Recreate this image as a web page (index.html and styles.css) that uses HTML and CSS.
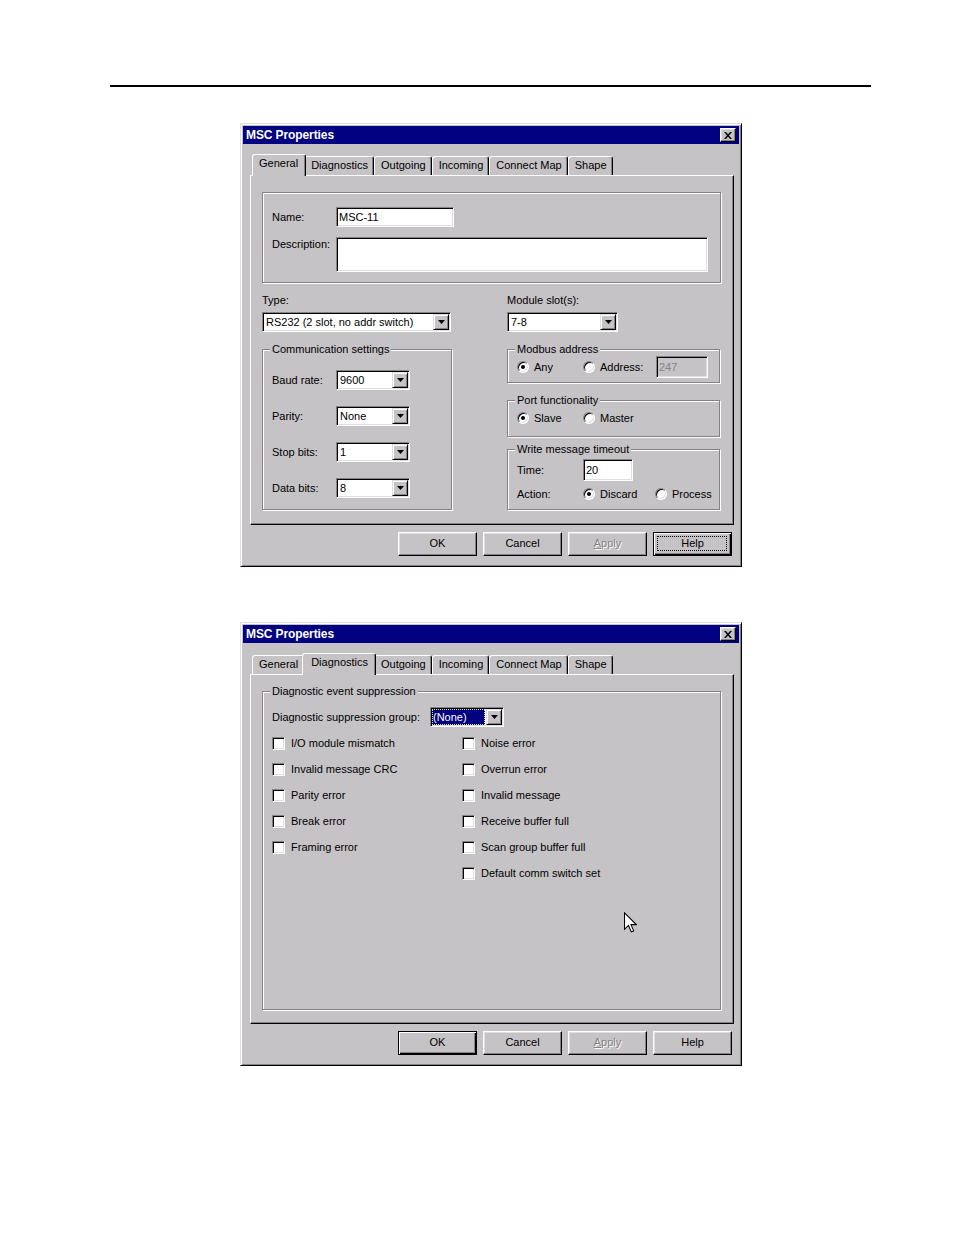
FILE: index.html
```html
<!DOCTYPE html>
<html>
<head>
<meta charset="utf-8">
<link rel="stylesheet" href="styles.css">
</head>
<body>
<div class="page">
  <div class="rule"></div>

  <div class="dialog d1">
    <div class="titlebar">
      <span class="title">MSC Properties</span>
      <span class="close"><svg width="8" height="7" viewBox="0 0 8 7"><path d="M0 0h2l2 2.4L6 0h2L5 3.5 8 7H6L4 4.6 2 7H0l3-3.5z" fill="#000"/></svg></span>
    </div>
    <div class="tabs">
      <div class="tab active">General</div>
      <div class="tab">Diagnostics</div>
      <div class="tab">Outgoing</div>
      <div class="tab">Incoming</div>
      <div class="tab">Connect Map</div>
      <div class="tab">Shape</div>
    </div>
    <div class="panel">
      <div class="plain-grp">
        <div class="frow">
          <span class="lbl w64">Name:</span>
          <div class="edit w118">MSC-11</div>
        </div>
        <div class="frow top">
          <span class="lbl w64 lbl-top">Description:</span>
          <div class="edit w372 tall"></div>
        </div>
      </div>
      <div class="cols">
        <div class="col">
          <span class="lbl-line">Type:</span>
          <div class="combo w189 mt5"><span class="val">RS232 (2 slot, no addr switch)</span><span class="drop"><svg width="7" height="4" viewBox="0 0 7 4"><path d="M0 0h7L3.5 4z" fill="#000"/></svg></span></div>
          <div class="grp g-comm">
            <span class="cap">Communication settings</span>
            <div class="rows">
              <div class="frow"><span class="lbl w64">Baud rate:</span><div class="combo w74"><span class="val">9600</span><span class="drop"><svg width="7" height="4" viewBox="0 0 7 4"><path d="M0 0h7L3.5 4z" fill="#000"/></svg></span></div></div>
              <div class="frow"><span class="lbl w64">Parity:</span><div class="combo w74"><span class="val">None</span><span class="drop"><svg width="7" height="4" viewBox="0 0 7 4"><path d="M0 0h7L3.5 4z" fill="#000"/></svg></span></div></div>
              <div class="frow"><span class="lbl w64">Stop bits:</span><div class="combo w74"><span class="val">1</span><span class="drop"><svg width="7" height="4" viewBox="0 0 7 4"><path d="M0 0h7L3.5 4z" fill="#000"/></svg></span></div></div>
              <div class="frow"><span class="lbl w64">Data bits:</span><div class="combo w74"><span class="val">8</span><span class="drop"><svg width="7" height="4" viewBox="0 0 7 4"><path d="M0 0h7L3.5 4z" fill="#000"/></svg></span></div></div>
            </div>
          </div>
        </div>
        <div class="col">
          <span class="lbl-line">Module slot(s):</span>
          <div class="combo w111 mt5"><span class="val">7-8</span><span class="drop"><svg width="7" height="4" viewBox="0 0 7 4"><path d="M0 0h7L3.5 4z" fill="#000"/></svg></span></div>
          <div class="grp g-modbus">
            <span class="cap">Modbus address</span>
            <div class="frow">
              <span class="opt w66"><span class="radio on"></span>Any</span>
              <span class="opt w73"><span class="radio"></span>Address:</span>
              <div class="edit w52 h22 disabled">247</div>
            </div>
          </div>
          <div class="grp g-port">
            <span class="cap">Port functionality</span>
            <div class="orow">
              <span class="opt w66"><span class="radio on"></span>Slave</span>
              <span class="opt"><span class="radio"></span>Master</span>
            </div>
          </div>
          <div class="grp g-wmt">
            <span class="cap">Write message timeout</span>
            <div class="frow time-row">
              <span class="lbl w66">Time:</span>
              <div class="edit w50 h22">20</div>
            </div>
            <div class="orow action-row">
              <span class="lbl w66">Action:</span>
              <span class="opt w72"><span class="radio on"></span>Discard</span>
              <span class="opt"><span class="radio"></span>Process</span>
            </div>
          </div>
        </div>
      </div>
    </div>
    <div class="btns">
      <div class="btn">OK</div>
      <div class="btn">Cancel</div>
      <div class="btn disabled"><u>A</u>pply</div>
      <div class="btn def focus">Help</div>
    </div>
  </div>

  <div class="dialog d2">
    <div class="titlebar">
      <span class="title">MSC Properties</span>
      <span class="close"><svg width="8" height="7" viewBox="0 0 8 7"><path d="M0 0h2l2 2.4L6 0h2L5 3.5 8 7H6L4 4.6 2 7H0l3-3.5z" fill="#000"/></svg></span>
    </div>
    <div class="tabs">
      <div class="tab">General</div>
      <div class="tab active">Diagnostics</div>
      <div class="tab">Outgoing</div>
      <div class="tab">Incoming</div>
      <div class="tab">Connect Map</div>
      <div class="tab">Shape</div>
    </div>
    <div class="panel panel2">
      <div class="grp g-diag">
        <span class="cap">Diagnostic event suppression</span>
        <div class="frow sup-row">
          <span class="lbl w158">Diagnostic suppression group:</span>
          <div class="combo w74"><span class="val sel"><span>(None)</span></span><span class="drop"><svg width="7" height="4" viewBox="0 0 7 4"><path d="M0 0h7L3.5 4z" fill="#000"/></svg></span></div>
        </div>
        <div class="checks">
          <div class="ccol left">
            <span class="chkrow"><span class="chk"></span>I/O module mismatch</span>
            <span class="chkrow"><span class="chk"></span>Invalid message CRC</span>
            <span class="chkrow"><span class="chk"></span>Parity error</span>
            <span class="chkrow"><span class="chk"></span>Break error</span>
            <span class="chkrow"><span class="chk"></span>Framing error</span>
          </div>
          <div class="ccol">
            <span class="chkrow"><span class="chk"></span>Noise error</span>
            <span class="chkrow"><span class="chk"></span>Overrun error</span>
            <span class="chkrow"><span class="chk"></span>Invalid message</span>
            <span class="chkrow"><span class="chk"></span>Receive buffer full</span>
            <span class="chkrow"><span class="chk"></span>Scan group buffer full</span>
            <span class="chkrow"><span class="chk"></span>Default comm switch set</span>
          </div>
        </div>
      </div>
    </div>
    <div class="btns">
      <div class="btn def">OK</div>
      <div class="btn">Cancel</div>
      <div class="btn disabled"><u>A</u>pply</div>
      <div class="btn">Help</div>
    </div>
    <svg class="cursor" width="13" height="21" viewBox="0 0 12.5 19.5"><path d="M0.5 0.5V16.3L4.3 12.6L7 18.8L9.3 17.8L6.7 11.8H11.8Z" fill="#fff" stroke="#000" stroke-width="1" stroke-linejoin="miter"/></svg>
  </div>
</div>
</body>
</html>
```

FILE: styles.css
```css
* { box-sizing: border-box; }
html, body { margin: 0; padding: 0; background: #fff; }
body {
  font-family: "Liberation Sans", Arial, sans-serif;
  font-size: 11px;
  color: #000;
}
.page { padding-top: 85px; }
.rule { margin-left: 110px; width: 761px; height: 2px; background: #000; }

.dialog {
  position: relative;
  width: 502px;
  margin-left: 240px;
  background: #c6c3c6;
  border: 1px solid;
  border-color: #dfdfdf #000 #000 #dfdfdf;
  box-shadow: inset 1px 1px #fff, inset -1px -1px #848284;
  padding: 2px;
}
.d1 { margin-top: 36px; }
.d2 { margin-top: 55px; }

.titlebar {
  display: flex;
  align-items: center;
  justify-content: space-between;
  height: 18px;
  background: #000080;
  color: #fff;
  padding: 0 3px 0 3px;
}
.title { font-weight: bold; font-size: 12px; letter-spacing: -0.1px; }
.close {
  width: 16px;
  height: 14px;
  background: #c6c3c6;
  border: 1px solid;
  border-color: #fff #000 #000 #fff;
  box-shadow: inset -1px -1px #848284, inset 1px 1px #dfdfdf;
  display: flex;
  align-items: center;
  justify-content: center;
}
.close svg { display: block; }

.tabs {
  display: flex;
  align-items: flex-end;
  height: 21px;
  margin: 10px 0 0 7px;
  padding-left: 2px;
}
.tab {
  height: 19px;
  padding: 0 5px 0 6px;
  line-height: 17px;
  border-top: 1px solid #fff;
  border-left: 1px solid #fff;
  border-right: 1px solid #000;
  box-shadow: inset -1px 0 #848284;
  border-radius: 3px 3px 0 0;
  background: #c6c3c6;
  white-space: nowrap;
}
.tab.active {
  position: relative;
  z-index: 1;
  height: 22px;
  margin: 0 -2px -1px -2px;
  padding: 0 7px 0 8px;
}
.tab.active:first-child { margin-left: 0; padding-left: 6px; }

.panel {
  display: flex;
  flex-direction: column;
  height: 350px;
  margin: 0 5px 0 7px;
  border: 1px solid;
  border-color: #fff #000 #000 #fff;
  box-shadow: inset -1px -1px #848284;
  padding: 16px 12px 0 11px;
}
.panel2 { padding-bottom: 13px; }

.plain-grp {
  display: flex;
  flex-direction: column;
  gap: 10px;
  border: 1px solid #848284;
  box-shadow: inset 1px 1px #fff, 1px 1px #fff;
  padding: 14px 9px 10px 9px;
}

.frow { display: flex; align-items: center; }
.frow.top { align-items: flex-start; }
.lbl { line-height: 20px; white-space: nowrap; flex: none; }
.lbl-top { line-height: 13px; padding-top: 1px; }
.lbl-line { display: block; line-height: 13px; }
.w64 { width: 64px; }
.w66 { width: 66px; }
.w72 { width: 72px; }
.w73 { width: 73px; }
.w158 { width: 158px; }

.edit {
  height: 20px;
  background: #fff;
  border: 1px solid;
  border-color: #848284 #fff #fff #848284;
  box-shadow: inset 1px 1px #000, inset -1px -1px #dfdfdf;
  padding: 1px 2px;
  line-height: 16px;
  white-space: nowrap;
  flex: none;
}
.edit.h22 { height: 22px; line-height: 18px; }
.edit.tall { height: 35px; }
.edit.disabled { background: #c6c3c6; color: #848284; }
.w118 { width: 118px; }
.w372 { width: 372px; }
.w52 { width: 52px; }
.w50 { width: 50px; }

.combo {
  display: flex;
  height: 20px;
  background: #fff;
  border: 1px solid;
  border-color: #848284 #fff #fff #848284;
  box-shadow: inset 1px 1px #000, inset -1px -1px #dfdfdf;
  padding: 1px;
  flex: none;
}
.combo .val {
  flex: 1;
  min-width: 0;
  padding-left: 2px;
  line-height: 16px;
  white-space: nowrap;
  overflow: hidden;
}
.combo .val.sel {
  background: #000080;
  color: #fff;
  outline: 1px dotted #e8e070;
  outline-offset: -1px;
  padding-left: 1px;
  margin-right: 1px;
}
.drop {
  width: 16px;
  height: 16px;
  flex: none;
  background: #c6c3c6;
  border: 1px solid;
  border-color: #dfdfdf #000 #000 #dfdfdf;
  box-shadow: inset 1px 1px #fff, inset -1px -1px #848284;
  display: flex;
  align-items: center;
  justify-content: center;
}
.drop svg { display: block; }
.w189 { width: 189px; }
.w111 { width: 111px; }
.w74 { width: 74px; }
.mt5 { margin-top: 5px; }

.cols {
  display: grid;
  grid-template-columns: 190px 213px;
  column-gap: 55px;
  margin-top: 11px;
}
.col { display: flex; flex-direction: column; align-items: flex-start; }
.col > .grp { align-self: stretch; }

.grp {
  display: flex;
  flex-direction: column;
  align-items: flex-start;
  border: 1px solid #848284;
  box-shadow: inset 1px 1px #fff, 1px 1px #fff;
  padding: 0 9px;
}
.cap {
  display: block;
  margin: -7px 0 0 -2px;
  padding: 0 2px;
  line-height: 13px;
  background: #c6c3c6;
  white-space: nowrap;
}

.g-comm { margin-top: 17px; padding-bottom: 11px; }
.g-comm .rows { display: flex; flex-direction: column; gap: 16px; margin-top: 14px; }

.g-modbus { margin-top: 17px; padding-bottom: 4px; }
.g-modbus .frow { margin-top: 0; }

.g-port { margin-top: 17px; padding-bottom: 11px; }
.orow { display: flex; align-items: center; height: 14px; }
.g-port .orow { margin-top: 4px; }

.g-wmt { margin-top: 12px; padding-bottom: 8px; }
.time-row { margin-top: 3px; }
.action-row { margin-top: 6px; }
.action-row .lbl { line-height: 14px; }

.opt { display: flex; align-items: center; gap: 5px; white-space: nowrap; flex: none; line-height: 14px; }
.radio {
  width: 12px;
  height: 12px;
  flex: none;
  border-radius: 50%;
  background: #fff;
  border: 1px solid;
  border-color: #848284 #fff #fff #848284;
  box-shadow: inset 1px 1px #000, inset -1px -1px #dfdfdf;
  display: flex;
  align-items: center;
  justify-content: center;
}
.radio.on::after {
  content: "";
  width: 4px;
  height: 4px;
  border-radius: 50%;
  background: #000;
}

.g-diag { flex: 1; align-self: stretch; }
.sup-row { margin-top: 9px; }
.checks { display: flex; margin-top: 10px; }
.ccol { display: flex; flex-direction: column; gap: 13px; }
.ccol.left { width: 190px; }
.chkrow { display: flex; align-items: center; gap: 6px; height: 13px; line-height: 13px; white-space: nowrap; }
.chk {
  width: 13px;
  height: 13px;
  flex: none;
  background: #fff;
  border: 1px solid;
  border-color: #848284 #fff #fff #848284;
  box-shadow: inset 1px 1px #000, inset -1px -1px #dfdfdf;
}

.btns {
  display: flex;
  justify-content: flex-end;
  gap: 6px;
  margin: 7px 7px 8px 0;
}
.btn {
  position: relative;
  width: 79px;
  height: 24px;
  text-align: center;
  line-height: 21px;
  background: #c6c3c6;
  border: 1px solid;
  border-color: #fff #000 #000 #fff;
  box-shadow: inset -1px -1px #848284, inset 1px 1px #dfdfdf;
}
.btn.def {
  border-color: #000;
  box-shadow: inset 1px 1px #fff, inset -1px -1px #000, inset -2px -2px #848284;
}
.btn.focus::after {
  content: "";
  position: absolute;
  left: 3px;
  right: 4px;
  top: 3px;
  bottom: 4px;
  border: 1px dotted #000;
}
.btn.disabled { color: #848284; text-shadow: 1px 1px #fff; }

.cursor {
  position: absolute;
  left: 383px;
  top: 289px;
  display: block;
}
```
